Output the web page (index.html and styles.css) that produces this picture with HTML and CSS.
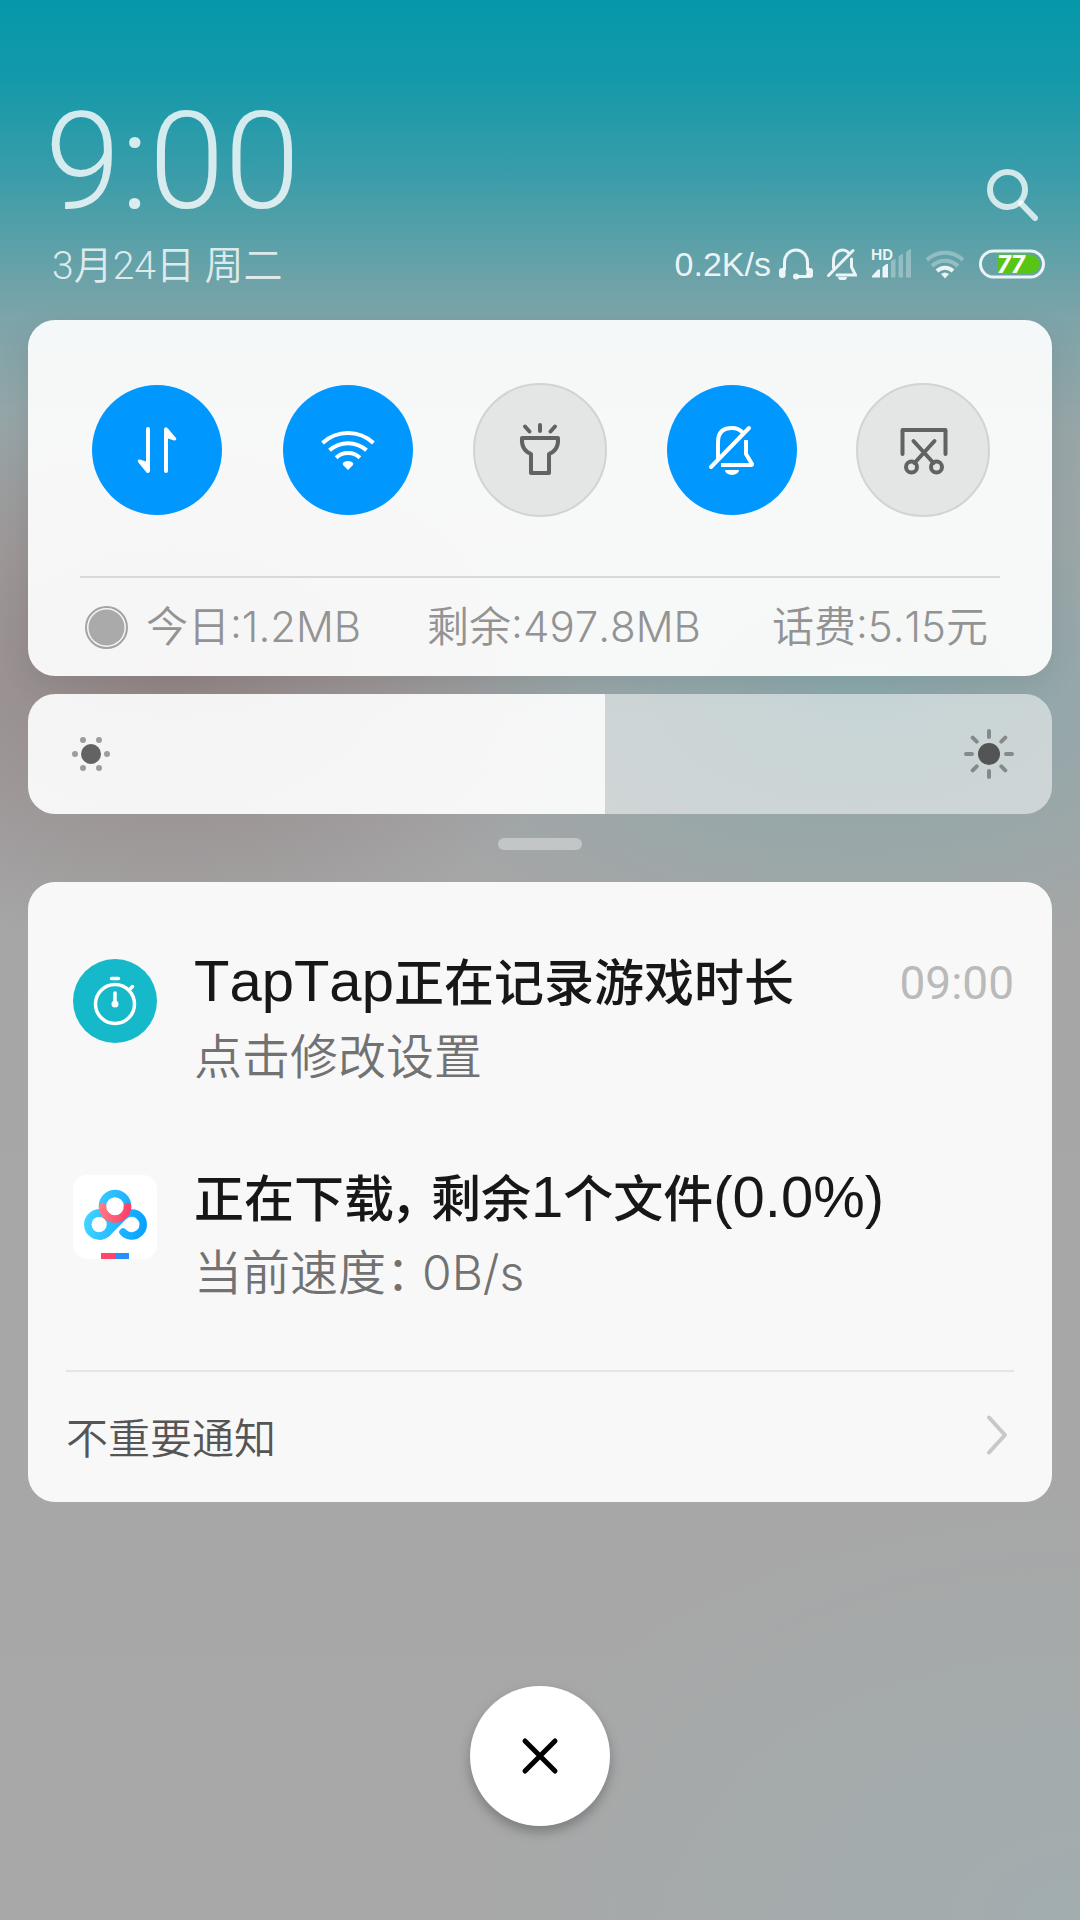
FILE: index.html
```
<!DOCTYPE html>
<html lang="zh-CN">
<head>
<meta charset="utf-8">
<meta name="viewport" content="width=device-width, initial-scale=1">
<title>通知中心</title>
<link rel="stylesheet" href="styles.css">
</head>
<body class="shade">
<header class="header">
  <div class="clock">
    <time class="clock-time">9:00</time>
    <p class="clock-date">3月24日 周二</p>
  </div>
  <div class="header-side">
    <button class="icon-button" type="button" aria-label="搜索">
      <svg width="52" height="52" viewBox="0 0 52 52" fill="none" stroke="currentColor" stroke-width="6" stroke-linecap="round"><circle cx="20.500" cy="20.500" r="17.500"/><path d="M34 34.500L48 49"/></svg>
    </button>
    <div class="status">
      <span class="speed">0.2K/s</span>
      <div class="status-icons">
        <svg width="34" height="32" viewBox="0 0 34 32" fill="none" stroke="currentColor" stroke-width="3"><path d="M5.500 22V14a11.500 12 0 0 1 23 0v8M18 28.500h9q2 0 2-3"/><rect x="0" y="20" width="6.500" height="10" rx="3" fill="currentColor" stroke="none"/><rect x="27.500" y="20" width="6.500" height="10" rx="3" fill="currentColor" stroke="none"/><circle cx="17" cy="28.500" r="3" fill="currentColor" stroke="none"/></svg>
        <svg width="30" height="32" viewBox="0 0 30 32" fill="none" stroke="currentColor" stroke-width="3" stroke-linecap="round"><path d="M6.500 20V12.500a9 10.500 0 0 1 16-6.500M1.500 27.500L26 2.500M24.500 11V19l4 8H10"/><path d="M11 29h9a4.500 3.500 0 0 1-9 0z" fill="currentColor" stroke="none"/></svg>
        <svg class="signal" width="40" height="32" viewBox="0 0 40 32" fill="currentColor"><text x="0" y="12" class="hd">HD</text><path d="M1 29.500V28l6-6.500h2v8zM11.500 29.500V19l4-3h1.500v13.500z"/><path opacity=".35" d="M20 29.500V13l3.500-2h1v18.500zM27.500 29.500V8.500l3.500-2.500h1v23.500zM35 29.500V4l4-3h1v28.500z"/></svg>
        <svg width="40" height="32" viewBox="0 0 40 32" fill="none" stroke="currentColor" stroke-width="4"><path opacity=".35" d="M2 12a26 26 0 0 1 36 0M7 18a18.500 18.500 0 0 1 26 0"/><path d="M12 23a11.500 11.500 0 0 1 16 0"/><path d="M20 30.500l-4-4.500q4-3 8 0z" fill="currentColor" stroke="none"/></svg>
        <svg width="66" height="32" viewBox="0 0 66 32"><rect x="1.500" y="3" width="63" height="26" rx="13" fill="none" stroke="currentColor" stroke-width="3"/><path d="M18 6.500h33a9.500 9.500 0 0 1 0 19H18z" fill="#58c516"/><text x="32" y="25" text-anchor="middle" class="battery">77</text></svg>
      </div>
    </div>
  </div>
</header>

<main class="panels">
  <section class="card controls" aria-label="快捷开关">
    <div class="toggles">
      <button class="toggle toggle-on" type="button" aria-label="移动数据" aria-pressed="true">
        <svg width="130" height="130" viewBox="0 0 130 130" fill="#fff"><path d="M54 44a2 2 0 0 1 4 0v42q-1 3-3.500 1.500L46 77q-1-3 2-2.500l6 2zM72 86a2 2 0 0 0 4 0V53.500l6 2q3 0 2-2.500l-8.500-10q-2.500-2-3.500 1z"/></svg>
      </button>
      <button class="toggle toggle-on" type="button" aria-label="WLAN" aria-pressed="true">
        <svg width="130" height="130" viewBox="0 0 130 130" fill="none" stroke="#fff" stroke-width="4"><path d="M39.500 58a37.500 37.500 0 0 1 51 0M46.500 65.300a27.500 27.500 0 0 1 37 0M53.100 72.700a17.500 17.500 0 0 1 23.800 0"/><path d="M65 85l-5-5q-1-2 1-3 4-2 8 0 2 1 1 3z" fill="#fff" stroke="none"/></svg>
      </button>
      <button class="toggle" type="button" aria-label="手电筒" aria-pressed="false">
        <svg width="130" height="130" viewBox="2 2 130 130" fill="none" stroke="#616262" stroke-width="4" stroke-linecap="round" stroke-linejoin="round"><path d="M49 55H85Q86 67 76 71V90H58V71Q48 67 49 55zM67 42v6M52 43.500l4.500 5M82 43.500l-4.500 5"/></svg>
      </button>
      <button class="toggle toggle-on" type="button" aria-label="静音" aria-pressed="true">
        <svg width="130" height="130" viewBox="0 0 130 130" fill="none" stroke="#fff" stroke-width="4" stroke-linecap="round" stroke-linejoin="round"><path d="M51 73V57q0-14 14-14 7 0 11 5M44 82L82 43"/><path d="M79 55V69l6 10q0 1-1 1H54" stroke-linecap="butt"/><path d="M58 85h14a7 5 0 0 1-14 0z" fill="#fff" stroke="none"/></svg>
      </button>
      <button class="toggle" type="button" aria-label="截屏" aria-pressed="false">
        <svg width="130" height="130" viewBox="1 2 130 130" fill="none" stroke="#616262" stroke-width="4" stroke-linecap="round" stroke-linejoin="round"><path d="M45.500 71V47h43v24M56.500 58l20 22M77.500 58l-20 22"/><circle cx="54.500" cy="84" r="5.500"/><circle cx="79.500" cy="84" r="5.500"/></svg>
      </button>
    </div>
    <div class="usage">
      <span class="usage-today">
        <svg width="43" height="43" viewBox="0 0 43 43"><circle cx="21.500" cy="21.500" r="20.500" fill="none" stroke="#a4a4a4" stroke-width="2"/><circle cx="21.500" cy="21.500" r="18" fill="#aaa"/></svg>
        今日:1.2MB
      </span>
      <span>剩余:497.8MB</span>
      <span class="usage-balance">话费:5.15元</span>
    </div>
  </section>

  <div class="brightness">
    <input class="brightness-range" type="range" min="0" max="1024" value="577" aria-label="亮度" style="--level: 56.35%">
    <svg class="brightness-low" width="38" height="38" viewBox="0 0 38 38" fill="#9d9d9d"><circle cx="19" cy="19" r="10" fill="#636363"/><circle cx="3" cy="19" r="3"/><circle cx="35" cy="19" r="3"/><circle cx="11" cy="5" r="3"/><circle cx="27" cy="5" r="3"/><circle cx="11" cy="33" r="3"/><circle cx="27" cy="33" r="3"/></svg>
    <svg class="brightness-high" width="50" height="50" viewBox="0 0 50 50" stroke="#868989" stroke-width="4" stroke-linecap="round"><circle cx="25" cy="25" r="11" fill="#535555" stroke="none"/><path d="M25 2v6M25 42v6M2 25h6M42 25h6M8.700 8.700l4 4M37.300 37.300l4 4M8.700 41.300l4-4M37.300 12.700l4-4"/></svg>
  </div>

  <div class="handle"></div>

  <section class="card notifications" aria-label="通知">
    <article class="notice">
      <svg class="notice-icon" width="84" height="84" viewBox="0 0 84 84" fill="none" stroke="#fff" stroke-width="3.500" stroke-linecap="round"><circle cx="42" cy="42" r="42" fill="#15b9c9" stroke="none"/><circle cx="42" cy="45" r="19.500"/><path d="M38.500 19.500h7M42 34v10M57 30l2.500-2.500"/><circle cx="42" cy="45" r="3.500" fill="#fff" stroke="none"/></svg>
      <div class="notice-body">
        <h2 class="notice-title"><span class="latin">TapTap</span>正在记录游戏时长</h2>
        <p class="notice-text">点击修改设置</p>
      </div>
      <time class="notice-time">09:00</time>
    </article>
    <article class="notice">
      <svg class="notice-icon" width="84" height="84" viewBox="0 0 84 84" fill="none" stroke-width="7.500" stroke-linecap="round">
        <defs>
          <linearGradient id="cloud" gradientUnits="userSpaceOnUse" x1="12" y1="40" x2="72" y2="48"><stop offset="0" stop-color="#43d4ff"/><stop offset="1" stop-color="#08a2ff"/></linearGradient>
          <linearGradient id="loop" gradientUnits="userSpaceOnUse" x1="28" y1="30" x2="56" y2="36"><stop offset="0" stop-color="#ff7b85"/><stop offset="1" stop-color="#ff3f68"/></linearGradient>
        </defs>
        <rect width="84" height="84" rx="14" fill="#fff"/>
        <g stroke="url(#cloud)"><path d="M29.500 31a12.500 12.500 0 0 1 25 0"/><path d="M34 58a11.500 11.500 0 1 1 0-17M34 58L50 42a11.500 11.500 0 1 1 0 15"/><path d="M26 38a11.500 11.500 0 0 1 0 23a11.500 11.500 0 0 0 8-3"/></g>
        <path d="M29.500 31.500a12.500 12.500 0 0 0 25 0" stroke="url(#loop)"/>
        <path d="M28 78h14v6H28z" fill="#ff4569"/><path d="M42 78h14v6H42z" fill="#268fff"/>
      </svg>
      <div class="notice-body">
        <h2 class="notice-title">正在下载<span class="punct">，</span>剩余<span class="latin">1</span>个文件<span class="latin">(0.0%)</span></h2>
        <p class="notice-text">当前速度<span class="punct">：</span>0B/s</p>
      </div>
    </article>
    <a class="more" href="#">
      不重要通知
      <svg width="30" height="42" viewBox="0 0 30 42" fill="none" stroke="#c8c8c8" stroke-width="4" stroke-linecap="round" stroke-linejoin="round"><path d="M5 3.500L21 21L5 38.500"/></svg>
    </a>
  </section>
</main>

<footer class="footer">
  <button class="clear" type="button" aria-label="清除全部">
    <svg width="140" height="140" viewBox="0 0 140 140" stroke="#000" stroke-width="5" stroke-linecap="round"><path d="M55 55l30 30M85 55l-30 30"/></svg>
  </button>
</footer>
</body>
</html>
```
FILE: styles.css
```
*,
*::before,
*::after {
  box-sizing: border-box;
}

.shade {
  margin: 0;
  min-height: 100vh;
  font-family: Inter, "Noto Sans CJK SC", sans-serif;
  font-weight: 350;
  font-kerning: none;
  background:
    radial-gradient(420px 280px at 170px 670px, rgba(135, 112, 112, .62), rgba(135, 112, 112, 0)),
    radial-gradient(500px 280px at 860px 690px, rgba(122, 170, 174, .62), rgba(122, 170, 174, 0)),
    radial-gradient(600px 420px at 100% 1920px, rgba(155, 178, 182, .5), rgba(155, 178, 182, 0)),
    linear-gradient(#0598aa 0, #1499a9 80px, #3c9da9 180px, #5ea1a8 250px, #7ca4a9 315px, #96a6a8 420px, #a4a5a6 540px, #a6a6a6 900px, #a8a8a8 1920px);
  background-color: #a8a8a8;
}

button {
  padding: 0;
  border: 0;
  background: none;
}

svg {
  display: block;
}

/* Clock and status bar */

.header {
  display: flex;
  justify-content: space-between;
  align-items: flex-end;
  padding: 94px 35px 30px 52px;
  color: rgba(255, 255, 255, .8);
  font-family: Roboto, "Noto Sans CJK SC", sans-serif;
}

.clock-time {
  display: block;
  margin-left: -7px;
  font-size: 136px;
  font-weight: 300;
  line-height: 136px;
}

.clock-date {
  margin: 12px 0 0;
  font-size: 39px;
  line-height: 48px;
}

.header-side {
  display: flex;
  flex-direction: column;
  align-items: flex-end;
  gap: 25px;
}

.icon-button {
  margin-right: 6px;
  color: rgba(255, 255, 255, .76);
}

.status {
  display: flex;
  align-items: center;
  gap: 8px;
  padding-bottom: 8px;
  color: rgba(255, 255, 255, .88);
}

.speed {
  font-family: "Liberation Sans", Arial, sans-serif;
  font-size: 34px;
  font-weight: 400;
  line-height: 36px;
}

.status-icons {
  display: flex;
  align-items: center;
  gap: 14px;
}

.signal {
  overflow: visible;
}

.hd {
  font: 700 15px Inter, sans-serif;
}

.battery {
  fill: #fff;
  font: italic 800 25px Roboto, sans-serif;
}

/* Cards */

.panels {
  display: flex;
  flex-direction: column;
  padding: 0 28px;
}

.card {
  border-radius: 27px;
}

.controls {
  padding: 63px 52px 0;
  background: rgba(255, 255, 255, .92);
  box-shadow: 0 8px 32px rgba(0, 0, 0, .08);
}

.toggles {
  display: grid;
  grid-template-columns: repeat(5, 1fr);
  align-items: center;
  justify-items: center;
  margin: 0 -19px;
  padding-bottom: 59px;
}

.toggle {
  display: grid;
  place-items: center;
  width: 134px;
  height: 134px;
  border: 2px solid #d2d3d3;
  border-radius: 50%;
  background: #e4e5e5;
}

.toggle-on {
  width: 130px;
  height: 130px;
  border: 0;
  background: #0098ff;
}

.usage {
  display: flex;
  align-items: center;
  gap: 66px;
  height: 100px;
  padding: 0 12px 0 5px;
  border-top: 2px solid #d8d9d9;
  color: #939393;
  font-size: 42px;
  line-height: 48px;
}

.usage-today {
  display: flex;
  align-items: center;
  gap: 18px;
}

.usage-balance {
  margin-left: auto;
}

/* Brightness: the icons share one grid cell with the slider */

.brightness {
  display: grid;
  align-items: center;
  height: 120px;
  margin-top: 18px;
  border-radius: 27px;
  overflow: hidden;
}

.brightness > * {
  grid-area: 1 / 1;
}

.brightness-range {
  width: 100%;
  height: 100%;
  margin: 0;
  appearance: none;
  background: linear-gradient(to right, rgba(255, 255, 255, .91) var(--level), rgba(255, 255, 255, .52) var(--level));
}

.brightness-range::-webkit-slider-thumb {
  appearance: none;
  width: 2px;
  height: 120px;
  background: transparent;
}

.brightness-low {
  margin-left: 44px;
  pointer-events: none;
}

.brightness-high {
  justify-self: end;
  margin-right: 38px;
  pointer-events: none;
}

.handle {
  align-self: center;
  width: 84px;
  height: 12px;
  margin: 24px 0 32px;
  border-radius: 6px;
  background: rgba(255, 255, 255, .36);
}

/* Notifications */

.notifications {
  padding: 64px 38px 0;
  background: #f8f8f8;
}

.notice {
  display: flex;
  align-items: flex-start;
  padding: 0 0 0 7px;
}

.notice + .notice {
  margin-top: 68px;
}

.notice-icon {
  flex: none;
  margin: 13px 37px 0 0;
}

.notice-body {
  flex: 1;
  min-width: 0;
}

.notice-title,
.notice-text {
  margin: 0;
  line-height: 74px;
  white-space: nowrap;
}

.notice-title {
  color: #171717;
  font-size: 50px;
  font-weight: 500;
  font-feature-settings: "palt";
}

.latin {
  font-family: "Liberation Sans", Arial, sans-serif;
  font-size: 58px;
  line-height: 50px;
}

.punct {
  padding-right: 12px;
}

.notice-text {
  color: #727272;
  font-size: 48px;
  font-feature-settings: "palt";
}

.notice-time {
  color: #bababa;
  font-family: Roboto, sans-serif;
  font-size: 46px;
  font-weight: 400;
  line-height: 74px;
}

.more {
  display: flex;
  align-items: center;
  justify-content: space-between;
  height: 132px;
  margin-top: 60px;
  padding-bottom: 4px;
  border-top: 2px solid #e5e5e5;
  color: #555;
  font-size: 42px;
  text-decoration: none;
}

.footer {
  display: flex;
  justify-content: center;
  padding: 184px 0 94px;
}

.clear {
  width: 140px;
  height: 140px;
  border-radius: 50%;
  background: #fff;
  box-shadow: 0 6px 12px rgba(0, 0, 0, .26);
}
```
